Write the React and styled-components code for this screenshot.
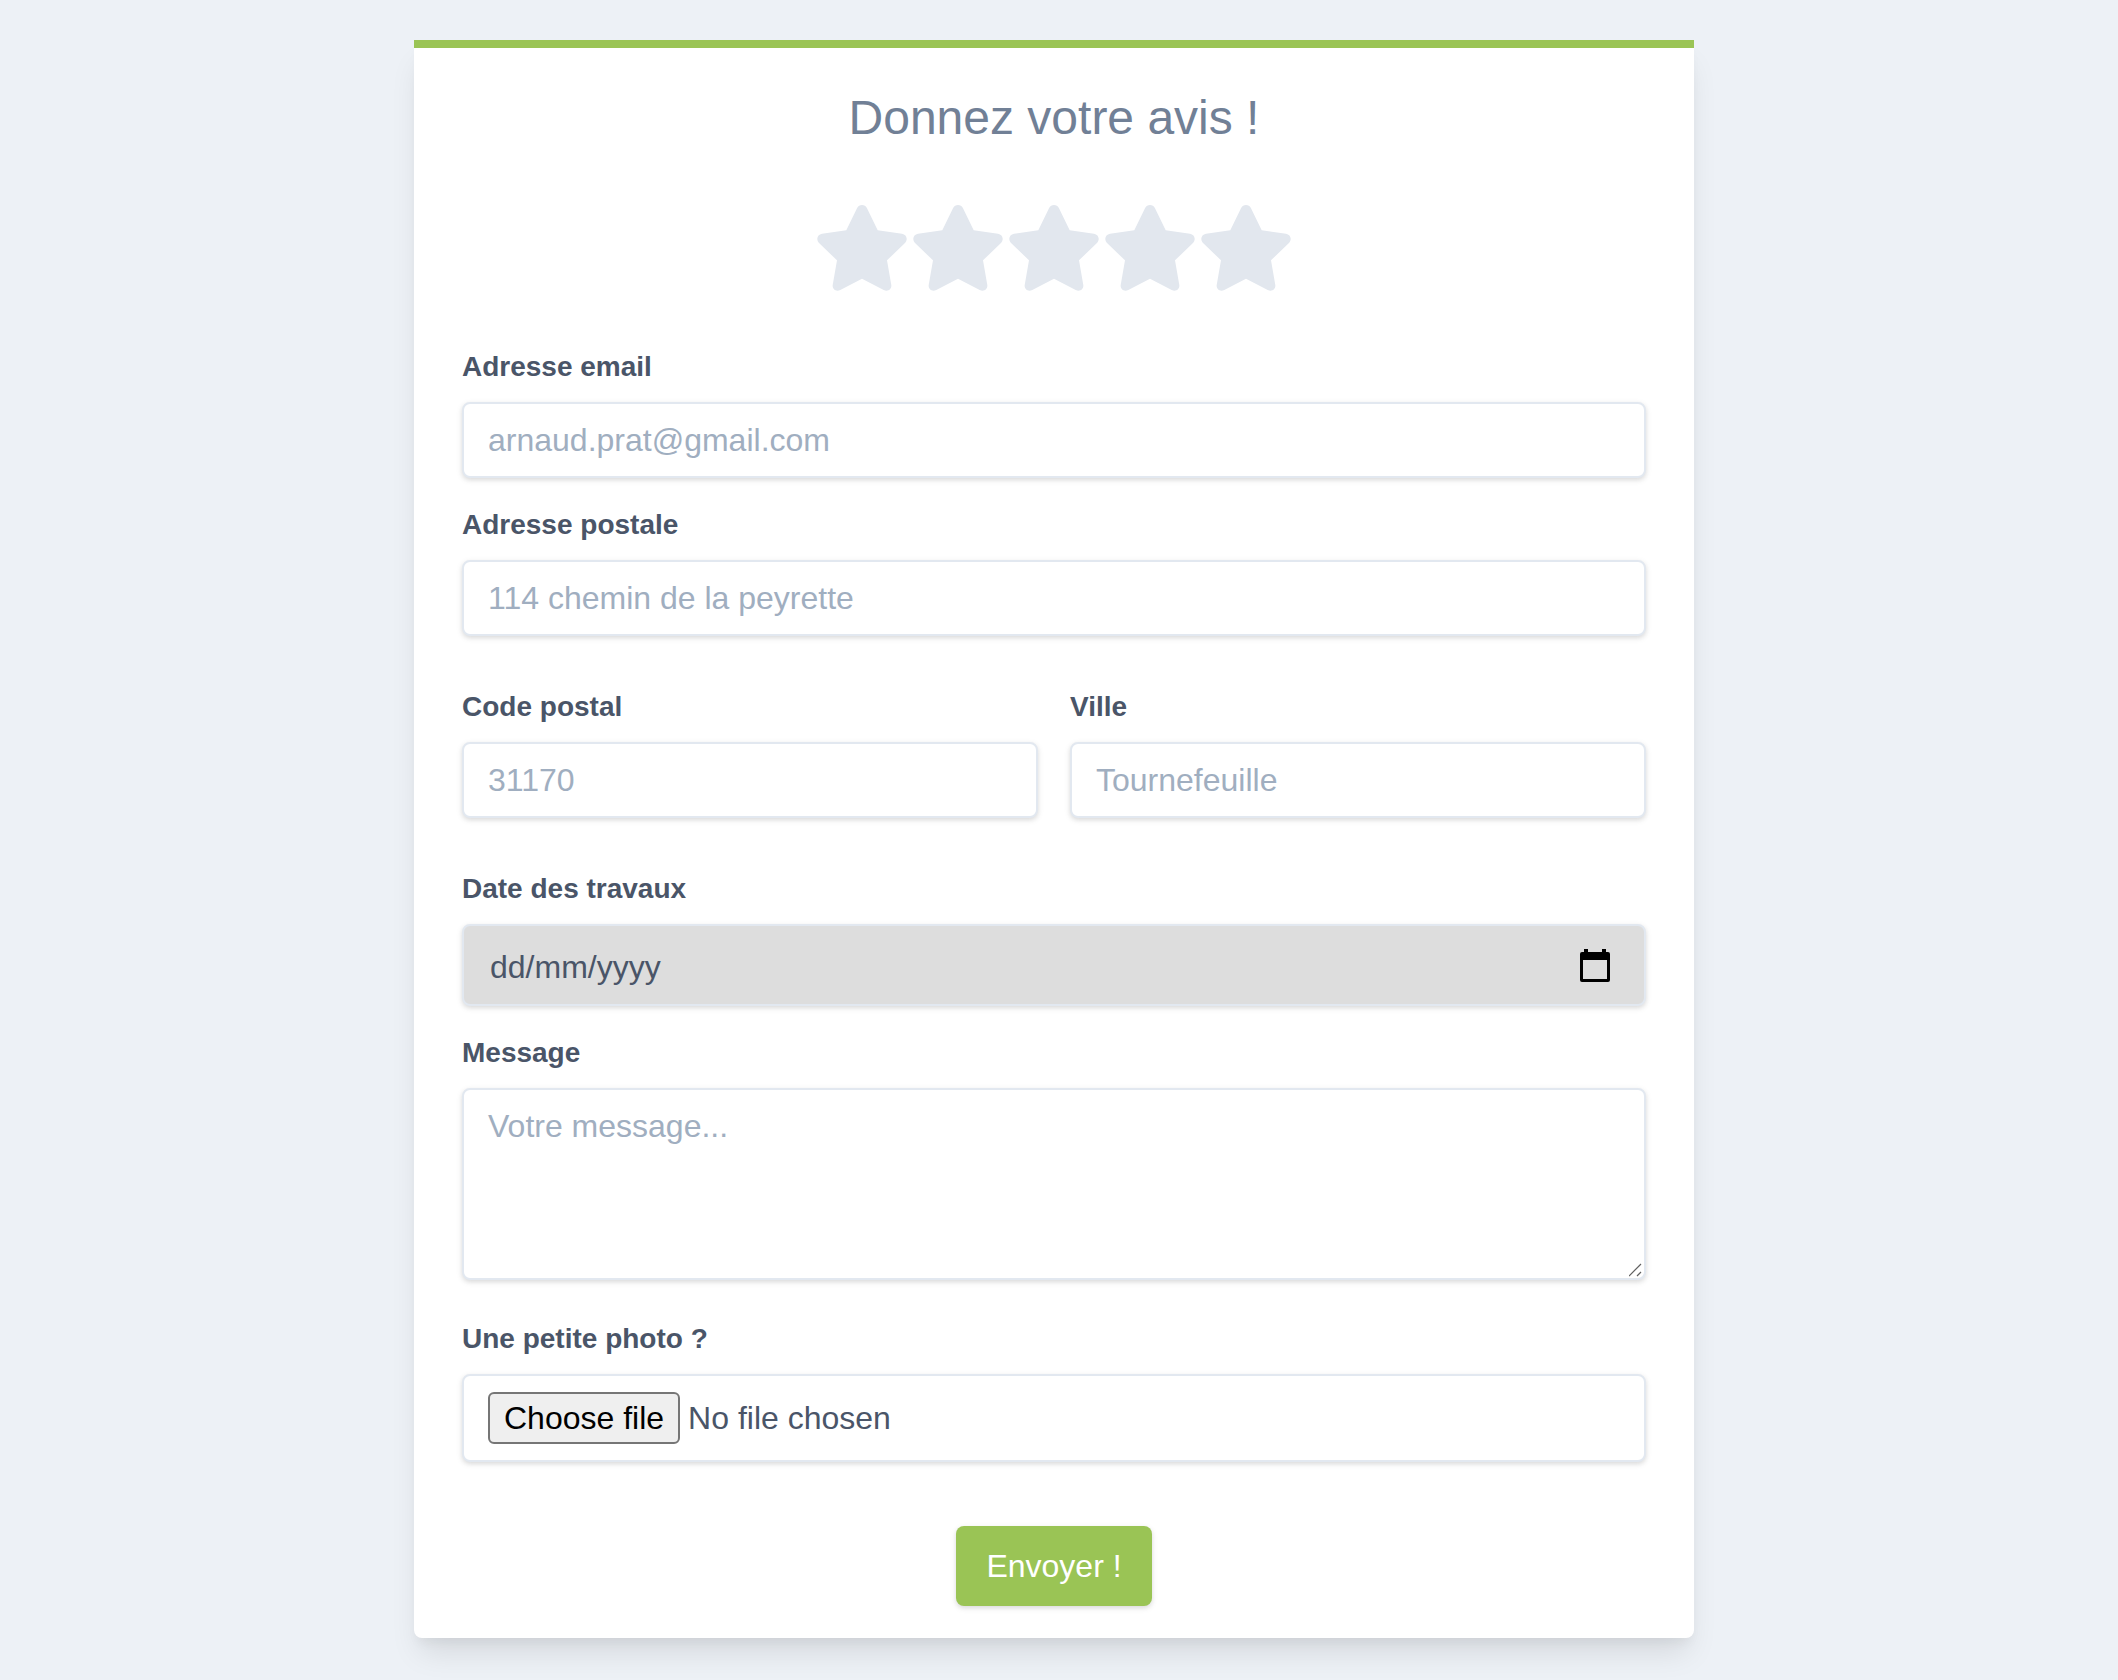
import React, { useState } from "react";
import styled, { createGlobalStyle, css } from "styled-components";

const colors = {
  page: "#edf1f6",
  card: "#ffffff",
  brand: "#9ac455",
  title: "#718096",
  text: "#4a5568",
  placeholder: "#a0aec0",
  border: "#e2e8f0",
  star: "#e2e7ee",
  starActive: "#f6c945",
  dateBackground: "#dddddd",
};

const GlobalStyle = createGlobalStyle`
  *, *::before, *::after { box-sizing: border-box; }
  body {
    margin: 0;
    background: ${colors.page};
    color: ${colors.text};
    font-family: "Liberation Sans", Arial, sans-serif;
    font-size: 32px;
    line-height: 1.5;
  }
  button, input, textarea { font: inherit; color: inherit; margin: 0; }
`;

const Page = styled.main`
  min-height: 100vh;
  padding: 40px 26px 40px 16px;
`;

const Card = styled.form`
  max-width: 1280px;
  margin: 0 auto;
  padding: 32px 48px;
  background: ${colors.card};
  border-top: 8px solid ${colors.brand};
  border-radius: 0 0 8px 8px;
  box-shadow: 0 20px 30px -6px rgba(0, 0, 0, 0.1),
    0 8px 12px -4px rgba(0, 0, 0, 0.05);
`;

const Title = styled.h1`
  margin: 0;
  color: ${colors.title};
  font-size: 48px;
  font-weight: 400;
  line-height: 76px;
  text-align: center;
`;

const Rating = styled.div`
  display: flex;
  justify-content: center;
  margin: 44px 0 48px;
`;

const StarButton = styled.button`
  display: block;
  width: 96px;
  height: 96px;
  padding: 0;
  border: 0;
  background: none;
  color: ${(p) => (p.$active ? colors.starActive : colors.star)};
  cursor: pointer;

  svg {
    display: block;
    width: 100%;
    height: 100%;
  }
`;

const Fields = styled.div`
  display: flex;
  flex-direction: column;
  gap: 48px;
`;

const Group = styled.div`
  display: flex;
  flex-direction: column;
  gap: ${(p) => p.$gap || 24}px;
`;

const Columns = styled.div`
  display: grid;
  grid-template-columns: 1fr 1fr;
  gap: 32px;
`;

const Field = styled.div`
  min-width: 0;
`;

const Label = styled.label`
  display: block;
  margin-bottom: 12px;
  font-size: 28px;
  font-weight: 700;
  line-height: 46px;
`;

const box = css`
  width: 100%;
  border: 2px solid ${colors.border};
  border-radius: 8px;
  background: ${colors.card};
  box-shadow: 0 2px 6px rgba(0, 0, 0, 0.1), 0 2px 4px rgba(0, 0, 0, 0.06);
`;

const placeholder = css`
  &::placeholder {
    color: ${colors.placeholder};
    opacity: 1;
  }
`;

const TextInput = styled.input`
  ${box}
  ${placeholder}
  display: block;
  padding: 16px 24px;
  height: 76px;
  line-height: 40px;
`;

const TextArea = styled.textarea`
  ${box}
  ${placeholder}
  display: block;
  height: 192px;
  padding: 16px 24px;
  line-height: 40px;
  resize: vertical;

  &::-webkit-resizer {
    background: url("data:image/svg+xml,%3Csvg xmlns='http://www.w3.org/2000/svg' viewBox='0 0 15 15'%3E%3Cpath d='M0 13L12 1M8 13L12 9' stroke='%23606060' stroke-width='1.2' fill='none'/%3E%3C/svg%3E")
      center / 100% 100% no-repeat;
  }
`;

const DateBox = styled.div`
  ${box}
  display: flex;
  align-items: center;
  height: 82px;
  padding: 0 30px 0 26px;
  background: ${colors.dateBackground};
`;

const DateInput = styled.input`
  flex: 1;
  min-width: 0;
  padding: 4px 0 0;
  border: 0;
  outline: 0;
  background: none;
  line-height: 40px;

  &::placeholder {
    color: ${colors.text};
    opacity: 1;
  }
`;

const CalendarButton = styled.button`
  display: block;
  width: 36px;
  height: 40px;
  padding: 0;
  border: 0;
  background: none;
  color: #000000;
  cursor: pointer;

  svg {
    display: block;
    width: 36px;
    height: 36px;
  }
`;

const FileBox = styled.label`
  ${box}
  display: flex;
  align-items: center;
  gap: 8px;
  padding: 16px 24px;
  cursor: pointer;
`;

const FileInput = styled.input`
  position: absolute;
  width: 1px;
  height: 1px;
  overflow: hidden;
  clip-path: inset(50%);
`;

const FileButton = styled.span`
  padding: 4px 14px;
  border: 2px solid #767676;
  border-radius: 6px;
  background: #efefef;
  color: #000000;
  line-height: 40px;
`;

const Submit = styled.button`
  display: block;
  margin: 64px auto 0;
  padding: 16px 30px;
  border: 0;
  border-radius: 8px;
  background: ${colors.brand};
  color: #ffffff;
  line-height: 48px;
  box-shadow: 0 2px 6px rgba(0, 0, 0, 0.1), 0 2px 4px rgba(0, 0, 0, 0.06);
  cursor: pointer;
`;

function StarIcon() {
  return (
    <svg viewBox="0 0 96 96" fill="currentColor" aria-hidden="true">
      <path d="M43 8.3C45 4 51 4 53 8.3L63.7 30.3L88 33.7C92.8 34.4 94.3 39.8 90.7 43.3L73 60.3L77.3 85C77.9 89.4 73.7 92.2 69.7 90L48 78.7L26.3 90C22.3 92.2 18.1 89.4 18.7 85L23 60.3L5.3 43.3C1.7 39.8 3.2 34.4 8 33.7L32.3 30.3Z" />
    </svg>
  );
}

function CalendarIcon() {
  return (
    <svg viewBox="0 0 36 36" aria-hidden="true">
      <path
        fill="currentColor"
        fillRule="evenodd"
        d="M6 2h4v3h14V2h4v3h2a2 2 0 0 1 2 2v26a2 2 0 0 1-2 2H4a2 2 0 0 1-2-2V7a2 2 0 0 1 2-2h2zM5 13v19h24V13z"
      />
    </svg>
  );
}

function TextField({ id, label, ...rest }) {
  return (
    <Field>
      <Label htmlFor={id}>{label}</Label>
      <TextInput id={id} name={id} {...rest} />
    </Field>
  );
}

export default function App() {
  const [rating, setRating] = useState(0);
  const [fileName, setFileName] = useState("");

  return (
    <>
      <GlobalStyle />
      <Page>
        <Card onSubmit={(e) => e.preventDefault()}>
          <Title>Donnez votre avis !</Title>
          <Rating role="group" aria-label="Note">
            {[1, 2, 3, 4, 5].map((n) => (
              <StarButton
                key={n}
                type="button"
                aria-label={`${n} / 5`}
                aria-pressed={n <= rating}
                $active={n <= rating}
                onClick={() => setRating(n)}
              >
                <StarIcon />
              </StarButton>
            ))}
          </Rating>

          <Fields>
            <Group>
              <TextField id="email" type="email" label="Adresse email" placeholder="arnaud.prat@gmail.com" />
              <TextField id="address" type="text" label="Adresse postale" placeholder="114 chemin de la peyrette" />
            </Group>

            <Columns>
              <TextField id="zip" type="text" label="Code postal" placeholder="31170" />
              <TextField id="city" type="text" label="Ville" placeholder="Tournefeuille" />
            </Columns>

            <Group $gap={36}>
              <Group>
                <Field>
                  <Label htmlFor="date">Date des travaux</Label>
                  <DateBox>
                    <DateInput id="date" name="date" type="text" inputMode="numeric" placeholder="dd/mm/yyyy" />
                    <CalendarButton type="button" aria-label="Calendrier">
                      <CalendarIcon />
                    </CalendarButton>
                  </DateBox>
                </Field>
                <Field>
                  <Label htmlFor="message">Message</Label>
                  <TextArea id="message" name="message" placeholder="Votre message..." />
                </Field>
              </Group>
              <Field>
                <Label htmlFor="photo">Une petite photo ?</Label>
                <FileBox>
                  <FileInput
                    id="photo"
                    name="photo"
                    type="file"
                    accept="image/*"
                    onChange={(e) => setFileName(e.target.files[0]?.name || "")}
                  />
                  <FileButton>Choose file</FileButton>
                  <span>{fileName || "No file chosen"}</span>
                </FileBox>
              </Field>
            </Group>
          </Fields>

          <Submit type="submit">Envoyer !</Submit>
        </Card>
      </Page>
    </>
  );
}
